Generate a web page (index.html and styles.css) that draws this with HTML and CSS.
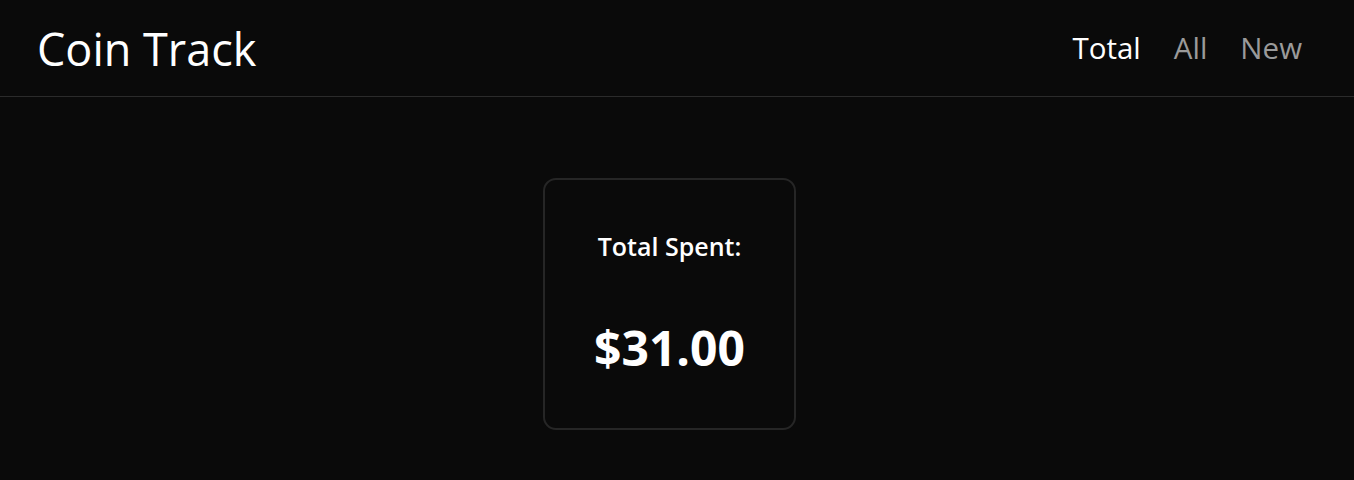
FILE: index.html
```html
<!DOCTYPE html>
<html lang="en">
<head>
<meta charset="utf-8">
<title>Coin Track</title>
<link rel="stylesheet" href="styles.css">
</head>
<body>
<header class="topbar">
  <h1 class="brand">Coin Track</h1>
  <nav class="nav">
    <a class="nav-link active" href="#">Total</a>
    <a class="nav-link" href="#">All</a>
    <a class="nav-link" href="#">New</a>
  </nav>
</header>
<main class="content">
  <section class="card">
    <h2 class="card-label">Total Spent:</h2>
    <p class="card-amount">$31.00</p>
  </section>
</main>
</body>
</html>
```

FILE: styles.css
```css
html, body {
  margin: 0;
  padding: 0;
  background: #0a0a0a;
  color: #ffffff;
  font-family: "Open Sans", "Noto Sans", sans-serif;
}

.topbar {
  height: 97px;
  box-sizing: border-box;
  display: flex;
  align-items: center;
  justify-content: space-between;
  padding: 0 52px 0 37px;
  border-bottom: 1px solid #2b2b2b;
}

.brand {
  margin: 0;
  font-size: 45px;
  font-weight: 400;
  line-height: 1;
}

.nav {
  display: flex;
  gap: 33px;
}

.nav-link {
  color: #9a9a9a;
  text-decoration: none;
  font-size: 29.5px;
  line-height: 1;
}

.nav-link.active {
  color: #ffffff;
}

.content {
  display: flex;
  padding: 81px 0 0 543px;
}

.card {
  width: 253px;
  height: 252px;
  box-sizing: border-box;
  border: 2px solid #262626;
  border-radius: 13px;
  display: flex;
  flex-direction: column;
  align-items: center;
}

.card-label {
  margin: 51px 0 0;
  font-size: 25px;
  font-weight: 600;
  line-height: 30px;
}

.card-amount {
  margin: 58px 0 0;
  font-size: 48px;
  font-weight: 700;
  line-height: 57.6px;
}
```
